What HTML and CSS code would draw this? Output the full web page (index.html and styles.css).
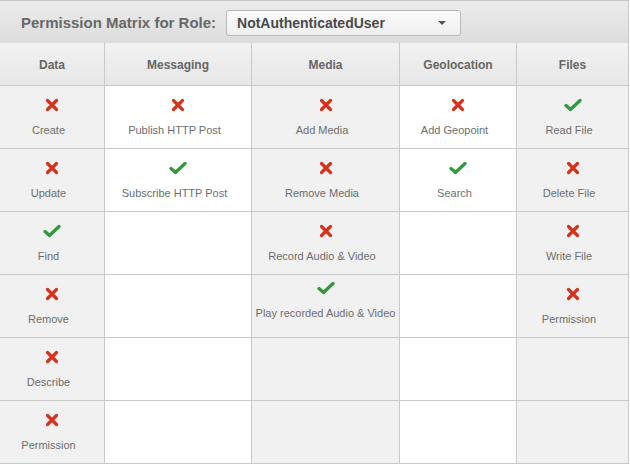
FILE: index.html
```html
<!DOCTYPE html>
<html>
<head>
<meta charset="utf-8">
<link rel="stylesheet" href="styles.css">
</head>
<body>
<div class="matrix">
  <div class="toolbar">
    <span class="title">Permission Matrix for Role:</span>
    <div class="select">
      <span class="select-value">NotAuthenticatedUser</span>
      <span class="caret"></span>
    </div>
  </div>
  <div class="grid">
    <!-- Data -->
    <div class="head">Data</div>
    <div class="cell shade"><svg class="icon deny" viewBox="0 0 14 14"><path d="M2.5 2.5L11.5 11.5M11.5 2.5L2.5 11.5"/></svg><span class="label">Create</span></div>
    <div class="cell shade"><svg class="icon deny" viewBox="0 0 14 14"><path d="M2.5 2.5L11.5 11.5M11.5 2.5L2.5 11.5"/></svg><span class="label">Update</span></div>
    <div class="cell shade"><svg class="icon allow" viewBox="0 0 18 14"><path d="M2 7.5L6.5 11.5L16 2.5"/></svg><span class="label">Find</span></div>
    <div class="cell shade"><svg class="icon deny" viewBox="0 0 14 14"><path d="M2.5 2.5L11.5 11.5M11.5 2.5L2.5 11.5"/></svg><span class="label">Remove</span></div>
    <div class="cell shade"><svg class="icon deny" viewBox="0 0 14 14"><path d="M2.5 2.5L11.5 11.5M11.5 2.5L2.5 11.5"/></svg><span class="label">Describe</span></div>
    <div class="cell shade"><svg class="icon deny" viewBox="0 0 14 14"><path d="M2.5 2.5L11.5 11.5M11.5 2.5L2.5 11.5"/></svg><span class="label">Permission</span></div>
    <!-- Messaging -->
    <div class="head">Messaging</div>
    <div class="cell"><svg class="icon deny" viewBox="0 0 14 14"><path d="M2.5 2.5L11.5 11.5M11.5 2.5L2.5 11.5"/></svg><span class="label">Publish HTTP Post</span></div>
    <div class="cell"><svg class="icon allow" viewBox="0 0 18 14"><path d="M2 7.5L6.5 11.5L16 2.5"/></svg><span class="label">Subscribe HTTP Post</span></div>
    <div class="cell"></div>
    <div class="cell"></div>
    <div class="cell"></div>
    <div class="cell"></div>
    <!-- Media -->
    <div class="head">Media</div>
    <div class="cell shade"><svg class="icon deny" viewBox="0 0 14 14"><path d="M2.5 2.5L11.5 11.5M11.5 2.5L2.5 11.5"/></svg><span class="label">Add Media</span></div>
    <div class="cell shade"><svg class="icon deny" viewBox="0 0 14 14"><path d="M2.5 2.5L11.5 11.5M11.5 2.5L2.5 11.5"/></svg><span class="label">Remove Media</span></div>
    <div class="cell shade"><svg class="icon deny" viewBox="0 0 14 14"><path d="M2.5 2.5L11.5 11.5M11.5 2.5L2.5 11.5"/></svg><span class="label">Record Audio &amp; Video</span></div>
    <div class="cell shade raised"><svg class="icon allow" viewBox="0 0 18 14"><path d="M2 7.5L6.5 11.5L16 2.5"/></svg><span class="label wide">Play recorded Audio &amp; Video</span></div>
    <div class="cell shade"></div>
    <div class="cell shade"></div>
    <!-- Geolocation -->
    <div class="head">Geolocation</div>
    <div class="cell"><svg class="icon deny" viewBox="0 0 14 14"><path d="M2.5 2.5L11.5 11.5M11.5 2.5L2.5 11.5"/></svg><span class="label">Add Geopoint</span></div>
    <div class="cell"><svg class="icon allow" viewBox="0 0 18 14"><path d="M2 7.5L6.5 11.5L16 2.5"/></svg><span class="label">Search</span></div>
    <div class="cell"></div>
    <div class="cell"></div>
    <div class="cell"></div>
    <div class="cell"></div>
    <!-- Files -->
    <div class="head">Files</div>
    <div class="cell shade"><svg class="icon allow" viewBox="0 0 18 14"><path d="M2 7.5L6.5 11.5L16 2.5"/></svg><span class="label">Read File</span></div>
    <div class="cell shade"><svg class="icon deny" viewBox="0 0 14 14"><path d="M2.5 2.5L11.5 11.5M11.5 2.5L2.5 11.5"/></svg><span class="label">Delete File</span></div>
    <div class="cell shade"><svg class="icon deny" viewBox="0 0 14 14"><path d="M2.5 2.5L11.5 11.5M11.5 2.5L2.5 11.5"/></svg><span class="label">Write File</span></div>
    <div class="cell shade"><svg class="icon deny" viewBox="0 0 14 14"><path d="M2.5 2.5L11.5 11.5M11.5 2.5L2.5 11.5"/></svg><span class="label">Permission</span></div>
    <div class="cell shade"></div>
    <div class="cell shade"></div>
  </div>
</div>
</body>
</html>
```

FILE: styles.css
```css
html, body {
  margin: 0;
  padding: 0;
  background: #ffffff;
}

body {
  font-family: "Liberation Sans", Arial, sans-serif;
}

.matrix {
  width: 628px;
  border-right: 1px solid #c9c9c9;
}

.toolbar {
  height: 42px;
  border-top: 1px solid #c6c6c6;
  background: linear-gradient(#ececec, #dcdcdc);
  display: flex;
  align-items: center;
  padding-left: 21px;
  gap: 10px;
}

.title {
  font-size: 15px;
  font-weight: bold;
  color: #686868;
}

.select {
  box-sizing: border-box;
  width: 235px;
  height: 26px;
  margin-top: 1px;
  border: 1px solid #b9b9b9;
  border-radius: 3px;
  background: linear-gradient(#fbfbfb, #efefef);
  display: flex;
  align-items: center;
  justify-content: space-between;
  padding: 0 14px 0 10px;
}

.select-value {
  font-size: 14px;
  font-weight: bold;
  color: #4a4a4a;
}

.caret {
  width: 0;
  height: 0;
  border-left: 4px solid transparent;
  border-right: 4px solid transparent;
  border-top: 4px solid #555555;
  margin-top: 1px;
}

.grid {
  display: grid;
  grid-template-columns: 104px 146px 147px 116px 111px;
  grid-template-rows: 42px repeat(6, 62px);
  grid-auto-flow: column;
  gap: 1px;
  background: #c9c9c9;
  border-bottom: 1px solid #c9c9c9;
}

.head {
  background: linear-gradient(#f2f2f2, #e7e7e7);
  display: flex;
  align-items: center;
  justify-content: center;
  padding-top: 1px;
  font-size: 12px;
  font-weight: bold;
  color: #666666;
}

.cell {
  background: #ffffff;
  display: flex;
  flex-direction: column;
  align-items: center;
  padding-top: 12px;
  box-sizing: border-box;
}

.cell.shade {
  background: #f1f1f1;
}

.cell.raised {
  padding-top: 6px;
}

.icon {
  height: 14px;
  fill: none;
  stroke-linecap: round;
  stroke-linejoin: round;
}

.icon.deny {
  width: 14px;
  stroke: #d6321b;
  stroke-width: 3.2;
}

.icon.allow {
  width: 18px;
  stroke: #2f9b3c;
  stroke-width: 3.3;
}

.label {
  margin-top: 12px;
  padding-right: 7px;
  font-size: 11px;
  line-height: 13px;
  color: #6e6e6e;
  white-space: nowrap;
}

.label.wide {
  padding-right: 0;
}
```
